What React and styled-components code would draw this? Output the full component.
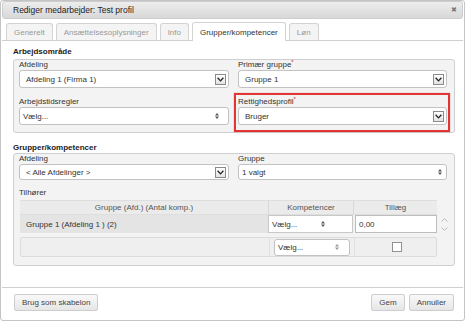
import React from 'react';
import styled, { createGlobalStyle } from 'styled-components';

const Global = createGlobalStyle`
  html, body { margin: 0; padding: 0; background: #fff; }
  body { font-family: "Liberation Sans", Arial, sans-serif; font-size: 8px; color: #333; }
  * { box-sizing: border-box; }
`;

const Dialog = styled.div`
  width: 465px;
  height: 321px;
  border: 1px solid #c4c4c4;
  border-radius: 3px;
  display: flex;
  flex-direction: column;
  background: #fff;
`;

const TitleBar = styled.div`
  height: 18px;
  margin: 0 1px;
  border: 1px solid #cdcdcd;
  border-radius: 3px;
  background: linear-gradient(#ededed, #d8d8d8);
  display: flex;
  align-items: center;
  justify-content: space-between;
  padding: 0 3px 0 10px;
`;

const Title = styled.span`
  font-size: 8.5px;
  color: #222;
`;

const Close = styled.span`
  width: 10px;
  height: 10px;
  display: flex;
  align-items: center;
  justify-content: center;
  color: #777;
  font-size: 7px;
  font-family: "DejaVu Sans", sans-serif;
  font-weight: bold;
`;

const TabRow = styled.div`
  display: flex;
  align-items: flex-end;
  gap: 3px;
  padding: 3px 0 0 4px;
  margin: 0 1px;
  border-bottom: 1px solid #cfcfcf;
`;

const Tab = styled.div`
  height: ${p => (p.$active ? 19 : 17)}px;
  margin-bottom: ${p => (p.$active ? -1 : 0)}px;
  padding: 0 7px;
  display: flex;
  align-items: center;
  border: 1px solid #d3d3d3;
  border-bottom: none;
  border-radius: 3px 3px 0 0;
  background: ${p => (p.$active ? '#fff' : '#f4f4f4')};
  color: ${p => (p.$active ? '#333' : '#999')};
  white-space: nowrap;
`;

const Panel = styled.div`
  flex: 1;
  padding: 6px 9px 0 12px;
  display: flex;
  flex-direction: column;
`;

const Heading = styled.div`
  font-weight: bold;
  line-height: 10px;
  height: 10px;
  margin-top: ${p => p.$mt || 0}px;
  margin-bottom: ${p => p.$mb || 0}px;
  color: #222;
`;

const Fieldset = styled.div`
  border: 1px solid #cfcfcf;
  border-radius: 3px;
  background: #f3f3f3;
  padding: 0 6px ${p => p.$pb || 0}px 5px;
`;

const Grid = styled.div`
  display: grid;
  grid-template-columns: 210px 209px;
  column-gap: 9px;
`;

const Field = styled.div`
  display: flex;
  flex-direction: column;
`;

const Highlight = styled.div`
  display: flex;
  flex-direction: column;
  margin: 5px ${p => (p.$right ? -3 : 0)}px 0 ${p => (p.$right ? -4 : 0)}px;
  padding: 2px ${p => (p.$right ? 1 : 0)}px 5px ${p => (p.$right ? 2 : 0)}px;
  border: 2px solid ${p => (p.$on ? '#e23636' : 'transparent')};
  border-left-width: ${p => (p.$right ? 2 : 0)}px;
  border-right-width: ${p => (p.$right ? 2 : 0)}px;
  box-shadow: ${p => (p.$on ? '0 0 1px rgba(200,0,0,0.5)' : 'none')};
`;

const Label = styled.div`
  line-height: 10px;
  height: 10px;
  color: #333;
  margin-top: ${p => p.$mt || 0}px;
  white-space: nowrap;
`;

const Req = styled.sup`
  color: #d42020;
  font-size: 6px;
  line-height: 0;
  vertical-align: 3px;
`;

const SelectBox = styled.div`
  height: ${p => p.$h || 18}px;
  width: ${p => (p.$w ? `${p.$w}px` : 'auto')};
  background: #fff;
  border: 1px solid #c2c2c2;
  border-radius: 3px;
  display: flex;
  align-items: center;
  justify-content: space-between;
  padding: 0 ${p => p.$pr ?? 2}px 0 ${p => p.$pl ?? 6}px;
  color: #333;
  white-space: nowrap;
`;

const ArrowBox = styled.span`
  width: 11px;
  height: 11px;
  border: 1px solid #8a8a8a;
  background: linear-gradient(#ffffff, #e2e2e2);
  display: flex;
  align-items: center;
  justify-content: center;
`;

const Chevron = () => (
  <svg width="7" height="5" viewBox="0 0 7 5">
    <path d="M0.6 0.8 L3.5 3.9 L6.4 0.8" fill="none" stroke="#222" strokeWidth="1.3" />
  </svg>
);

const UpDown = ({ color = '#555' }) => (
  <svg width="4" height="6" viewBox="0 0 4 6">
    <path d="M2 0 L4 2.4 H0 Z M0 3.6 H4 L2 6 Z" fill={color} />
  </svg>
);

const DropSelect = ({ children, h }) => (
  <SelectBox $h={h} $pl={6} $pr={2}>
    <span>{children}</span>
    <ArrowBox><Chevron /></ArrowBox>
  </SelectBox>
);

const NativeSelect = ({ children, h, pr = 9, w, iconColor }) => (
  <SelectBox $h={h} $pl={3} $pr={pr} $w={w}>
    <span>{children}</span>
    <UpDown color={iconColor} />
  </SelectBox>
);

const Table = styled.div`
  margin: 2px 0 0 1px;
  display: grid;
  grid-template-columns: 248px 85px 84px 12px;
`;

const HeadCell = styled.div`
  height: 15px;
  background: #ebebeb;
  border-top: 1px solid #dedede;
  border-bottom: 1px solid #dedede;
  border-left: ${p => (p.$sep ? '1px solid #d8d8d8' : 'none')};
  display: flex;
  align-items: center;
  justify-content: center;
  color: #555;
`;

const Blank = styled.div``;

const Cell = styled.div`
  height: 18px;
  background: ${p => p.$bg || 'transparent'};
  display: flex;
  align-items: center;
  padding-left: ${p => p.$pl || 0}px;
  color: #333;
`;

const NumInput = styled.div`
  flex: 1;
  height: 18px;
  margin-left: 2px;
  background: #fff;
  border: 1px solid #bdbdbd;
  display: flex;
  align-items: center;
  padding-left: 3px;
`;

const KompCell = styled.div`
  height: 18px;
  background: #fff;
  border: 1px solid #c8c8c8;
  display: flex;
  align-items: center;
  padding-left: 3px;
`;

const KompText = styled.span`
  width: 49px;
`;

const Spinner = styled.div`
  display: flex;
  flex-direction: column;
  align-items: center;
  justify-content: center;
  gap: 5px;
  padding-left: 3px;
`;

const Row2 = styled.div`
  grid-column: 1 / 4;
  margin-top: 4px;
  height: 20px;
  display: grid;
  grid-template-columns: 248px 85px 84px;
  background: #efefef;
  border: 1px solid #dcdcdc;
  border-radius: 2px;
`;

const Row2Cell = styled.div`
  display: flex;
  align-items: center;
  justify-content: center;
  border-left: ${p => (p.$sep ? '1px solid #e0e0e0' : 'none')};
`;

const Checkbox = styled.span`
  width: 10px;
  height: 10px;
  background: #fff;
  border: 1px solid #8f8f8f;
`;

const Footer = styled.div`
  height: 33px;
  margin: 0 1px;
  border-top: 1px solid #cfcfcf;
  display: flex;
  justify-content: space-between;
  align-items: flex-start;
  padding: 6px 9px 0 12px;
`;

const ButtonGroup = styled.div`
  display: flex;
  gap: 4px;
`;

const Button = styled.button`
  height: 17px;
  padding: 0 ${p => p.$px || 7}px;
  font-family: "Liberation Sans", Arial, sans-serif;
  font-size: 8px;
  color: #444;
  background: linear-gradient(#f9f9f9, #e6e6e6);
  border: 1px solid #cdcdcd;
  border-radius: 2px;
  cursor: pointer;
`;

const SpinChevron = ({ up }) => (
  <svg width="7" height="4" viewBox="0 0 7 4">
    <path d={up ? 'M0.5 3.5 L3.5 0.6 L6.5 3.5' : 'M0.5 0.5 L3.5 3.4 L6.5 0.5'} fill="none" stroke="#bbb" strokeWidth="1" />
  </svg>
);

export default function App() {
  return (
    <>
      <Global />
      <Dialog>
        <TitleBar>
          <Title>Rediger medarbejder: Test profil</Title>
          <Close>✖</Close>
        </TitleBar>
        <TabRow>
          <Tab>Generelt</Tab>
          <Tab>Ansættelsesoplysninger</Tab>
          <Tab>Info</Tab>
          <Tab $active>Grupper/kompetencer</Tab>
          <Tab>Løn</Tab>
        </TabRow>
        <Panel>
          <Heading $mb={2}>Arbejdsområde</Heading>
          <Fieldset>
            <Grid>
              <Field>
                <Label>Afdeling</Label>
                <DropSelect>Afdeling 1 (Firma 1)</DropSelect>
              </Field>
              <Field>
                <Label>Primær gruppe<Req>*</Req></Label>
                <DropSelect>Gruppe 1</DropSelect>
              </Field>
              <Highlight>
                <Label>Arbejdstidsregler</Label>
                <NativeSelect pr={9}>Vælg...</NativeSelect>
              </Highlight>
              <Highlight $right $on>
                <Label>Rettighedsprofil<Req>*</Req></Label>
                <DropSelect>Bruger</DropSelect>
              </Highlight>
            </Grid>
          </Fieldset>

          <Heading $mt={10}>Grupper/kompetencer</Heading>
          <Fieldset $pb={8}>
            <Grid>
              <Field>
                <Label>Afdeling</Label>
                <DropSelect h={16}>&lt; Alle Afdelinger &gt;</DropSelect>
              </Field>
              <Field>
                <Label>Gruppe</Label>
                <NativeSelect h={16} pr={4}>1 valgt</NativeSelect>
              </Field>
            </Grid>
            <Label $mt={8}>Tilhører</Label>
            <Table>
              <HeadCell>Gruppe (Afd.) (Antal komp.)</HeadCell>
              <HeadCell $sep>Kompetencer</HeadCell>
              <HeadCell $sep>Tillæg</HeadCell>
              <Blank />
              <Cell $bg="#e4e4e4" $pl={6}>Gruppe 1 (Afdeling 1 ) (2)</Cell>
              <KompCell>
                <KompText>Vælg...</KompText>
                <UpDown />
              </KompCell>
              <Cell><NumInput>0,00</NumInput></Cell>
              <Spinner>
                <SpinChevron up />
                <SpinChevron />
              </Spinner>
              <Row2>
                <Row2Cell />
                <Row2Cell $sep>
                  <NativeSelect h={17} pr={10} w={76} iconColor="#999">Vælg...</NativeSelect>
                </Row2Cell>
                <Row2Cell $sep><Checkbox /></Row2Cell>
              </Row2>
            </Table>
          </Fieldset>
        </Panel>
        <Footer>
          <Button $px={7}>Brug som skabelon</Button>
          <ButtonGroup>
            <Button $px={7}>Gem</Button>
            <Button $px={7}>Annuller</Button>
          </ButtonGroup>
        </Footer>
      </Dialog>
    </>
  );
}
